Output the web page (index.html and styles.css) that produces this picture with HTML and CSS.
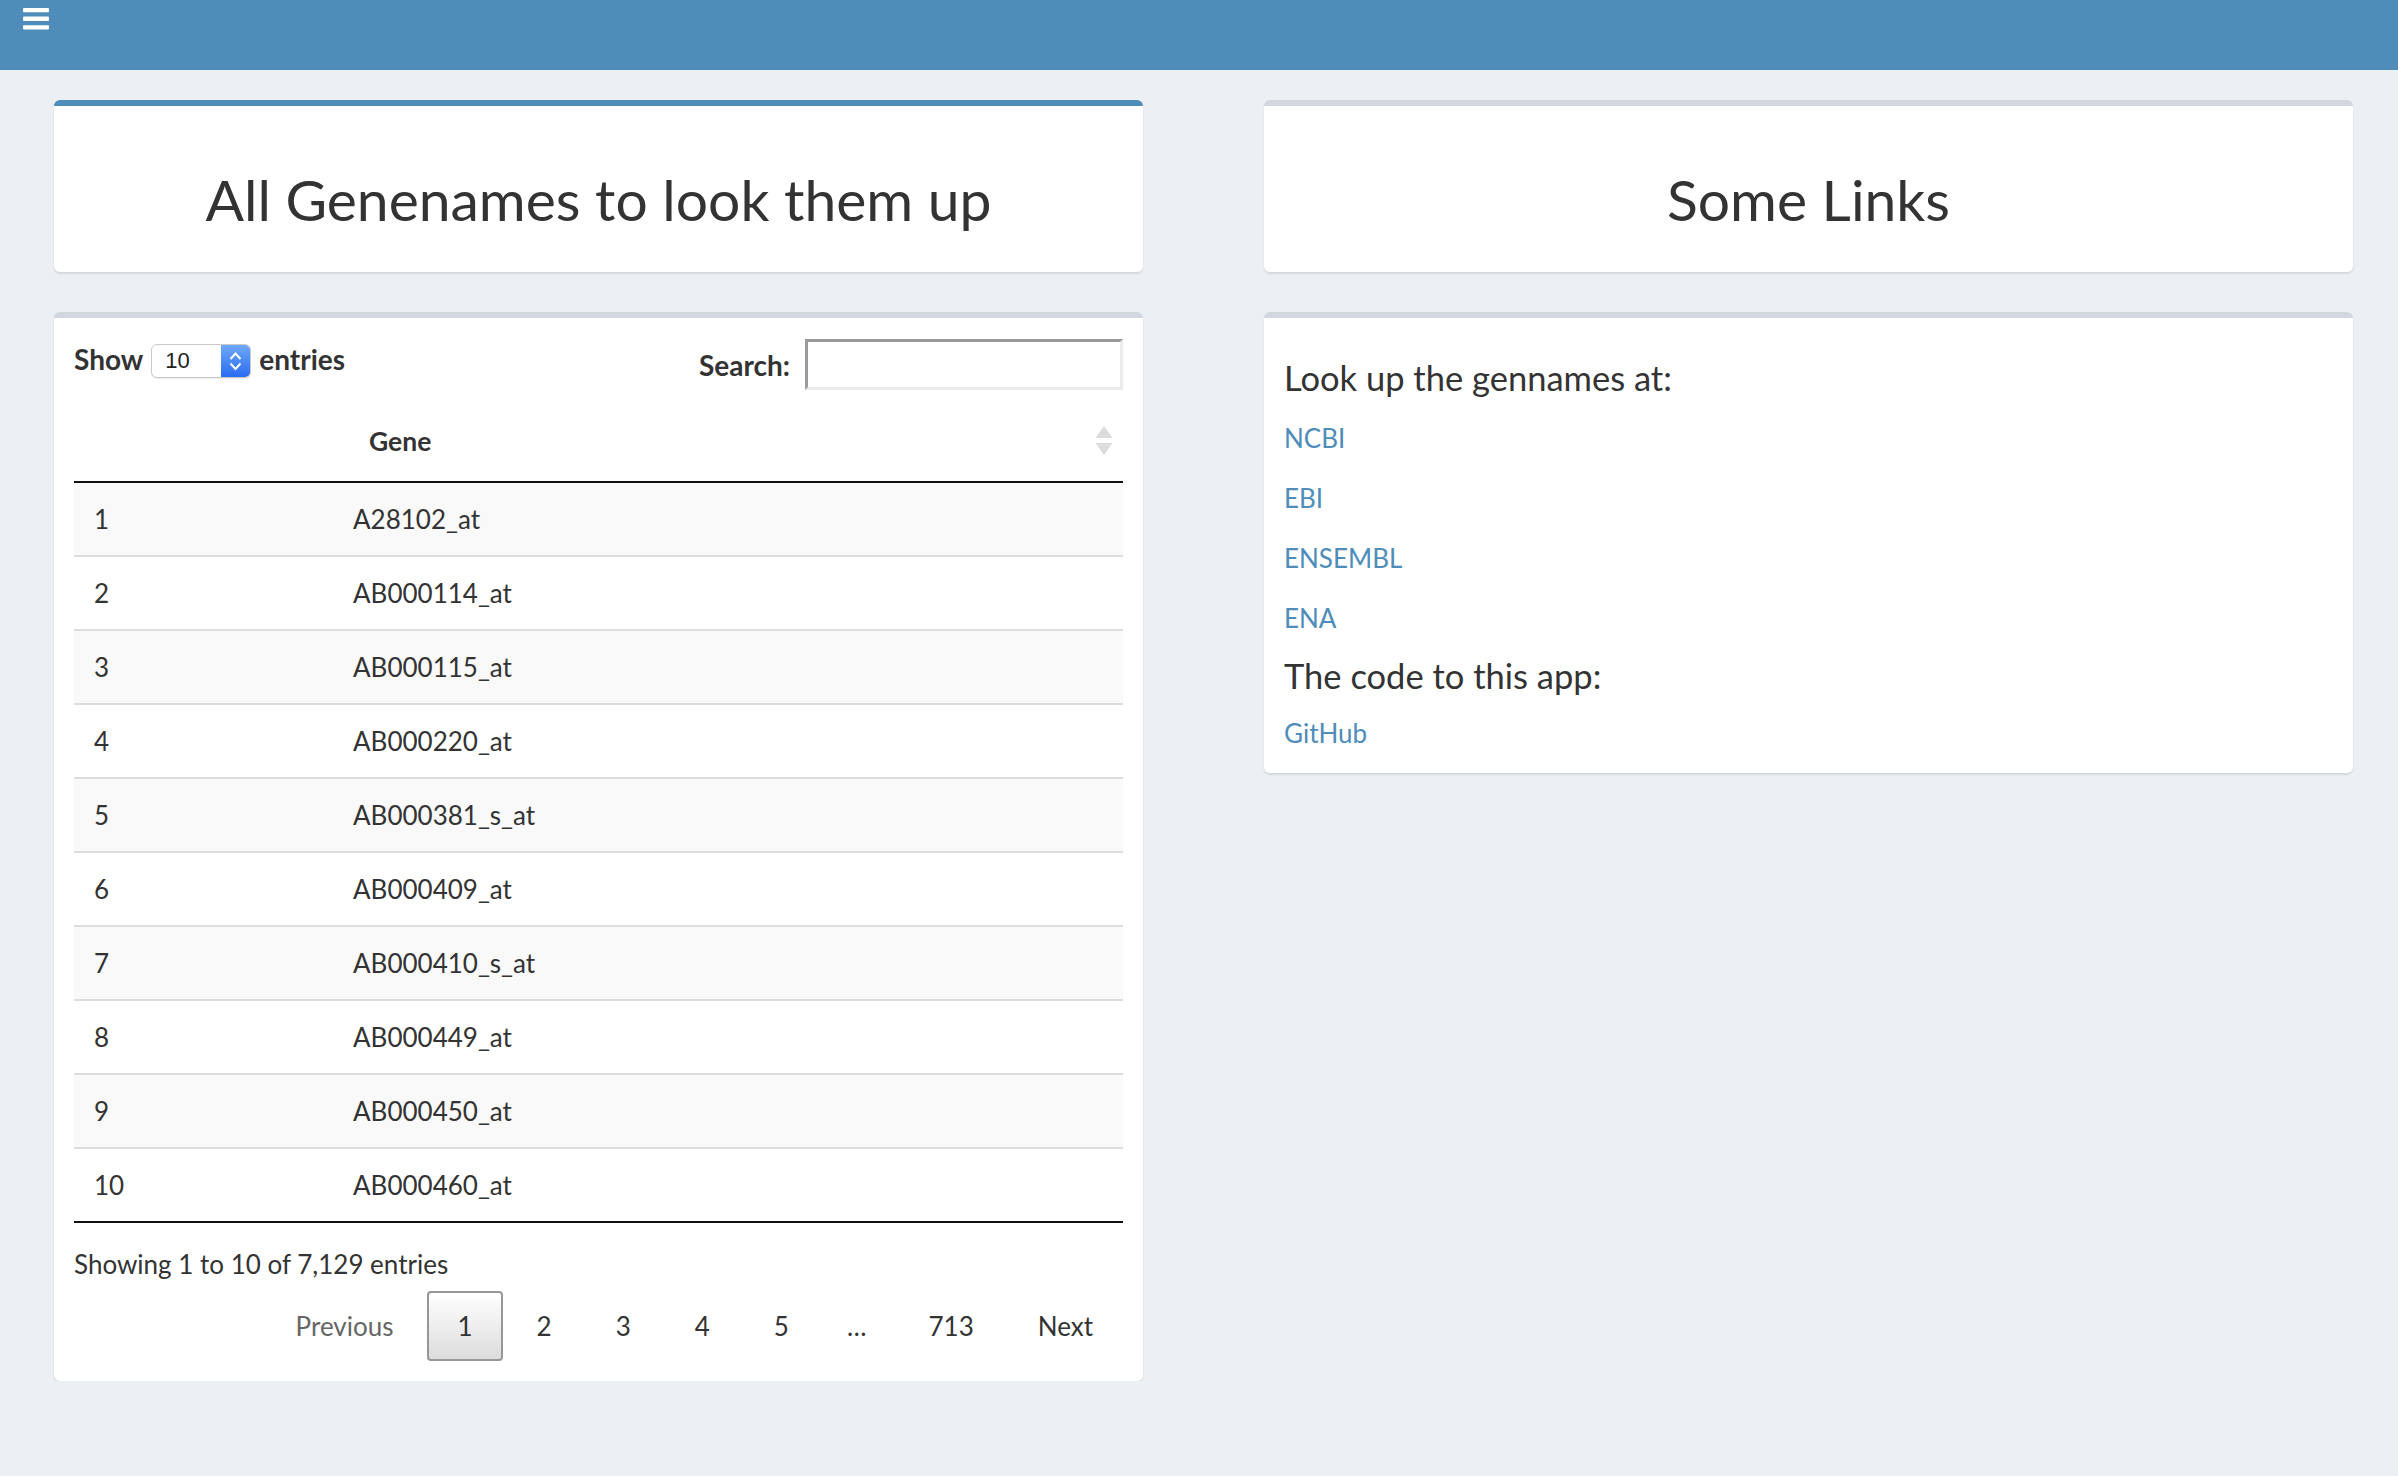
FILE: index.html
```html
<!DOCTYPE html>
<html lang="en">
<head>
<meta charset="utf-8">
<title>Genenames</title>
<link rel="stylesheet" href="styles.css">
</head>
<body>
<header class="topbar">
  <span class="menu-toggle" aria-label="Toggle navigation">
    <svg width="26" height="22" viewBox="0 0 26 22"><rect x="0" y="0" width="26" height="4.3" rx="1" fill="#fff"/><rect x="0" y="8.6" width="26" height="4.3" rx="1" fill="#fff"/><rect x="0" y="17.2" width="26" height="4.3" rx="1" fill="#fff"/></svg>
  </span>
</header>
<main class="content">
  <div class="col">
    <section class="box box-primary">
      <div class="box-body">
        <h2 class="box-heading">All Genenames to look them up</h2>
      </div>
    </section>
    <section class="box">
      <div class="box-body">
        <div class="dt-toolbar">
          <label class="dt-length">Show
            <span class="select-box"><span class="select-value">10</span><span class="select-arrows"><svg width="29" height="34" viewBox="0 0 29 34"><polyline points="9.5,15 14.5,9.5 19.5,15" fill="none" stroke="#fff" stroke-width="2"/><polyline points="9.5,19.5 14.5,25 19.5,19.5" fill="none" stroke="#fff" stroke-width="2"/></svg></span></span>
            entries</label>
          <label class="dt-filter">Search:<input type="search" class="search-input"></label>
        </div>
        <table class="dt-table">
          <colgroup><col class="col-idx"><col></colgroup>
          <thead>
            <tr><th></th><th><div class="th-inner"><span>Gene</span><svg class="sort-icon" width="18" height="30" viewBox="0 0 18 30"><polygon points="9,0 17.5,12 0.5,12" fill="#dcdcdc"/><polygon points="0.5,17 17.5,17 9,29" fill="#dcdcdc"/></svg></div></th></tr>
          </thead>
          <tbody>
            <tr><td>1</td><td>A28102_at</td></tr>
            <tr><td>2</td><td>AB000114_at</td></tr>
            <tr><td>3</td><td>AB000115_at</td></tr>
            <tr><td>4</td><td>AB000220_at</td></tr>
            <tr><td>5</td><td>AB000381_s_at</td></tr>
            <tr><td>6</td><td>AB000409_at</td></tr>
            <tr><td>7</td><td>AB000410_s_at</td></tr>
            <tr><td>8</td><td>AB000449_at</td></tr>
            <tr><td>9</td><td>AB000450_at</td></tr>
            <tr><td>10</td><td>AB000460_at</td></tr>
          </tbody>
        </table>
        <div class="dt-info">Showing 1 to 10 of 7,129 entries</div>
        <div class="dt-paginate">
          <span class="page-btn disabled">Previous</span>
          <span class="page-btn current">1</span>
          <span class="page-btn">2</span>
          <span class="page-btn">3</span>
          <span class="page-btn">4</span>
          <span class="page-btn">5</span>
          <span class="ellipsis">…</span>
          <span class="page-btn">713</span>
          <span class="page-btn">Next</span>
        </div>
      </div>
    </section>
  </div>
  <div class="col">
    <section class="box">
      <div class="box-body">
        <h2 class="box-heading">Some Links</h2>
      </div>
    </section>
    <section class="box">
      <div class="box-body links-body">
        <h4 class="links-head">Look up the gennames at:</h4>
        <p class="link-line"><a href="#">NCBI</a></p>
        <p class="link-line"><a href="#">EBI</a></p>
        <p class="link-line"><a href="#">ENSEMBL</a></p>
        <p class="link-line group-end"><a href="#">ENA</a></p>
        <h4 class="links-head second">The code to this app:</h4>
        <p class="link-line last"><a href="#">GitHub</a></p>
      </div>
    </section>
  </div>
</main>
</body>
</html>
```
FILE: styles.css
```css
* { box-sizing: border-box; }

body {
  margin: 0;
  background: #ecf0f5;
  font-family: Lato, "Liberation Sans", sans-serif;
  font-size: 26px;
  color: #333;
}

.topbar {
  height: 70px;
  background: #4e8cb9;
  padding: 8px 0 0 23px;
}

.menu-toggle { display: block; width: 26px; height: 22px; }
.menu-toggle svg { display: block; }

.content {
  display: grid;
  grid-template-columns: 1089px 1089px;
  column-gap: 121px;
  padding: 30px 45px 0 54px;
  align-items: start;
}

.col { display: flex; flex-direction: column; gap: 40px; }

.box {
  background: #fff;
  border-top: 6px solid #d2d6de;
  border-radius: 6px;
  box-shadow: 0 2px 2px rgba(0, 0, 0, 0.1);
}

.box-primary { border-top-color: #4e8cb9; }

.box-body { padding: 20px; }

.box-heading {
  margin: 40px 0 20px;
  font-size: 57px;
  line-height: 66px;
  font-weight: 400;
  text-align: center;
}

/* table toolbar */
.dt-toolbar {
  display: flex;
  justify-content: space-between;
  align-items: flex-start;
  height: 52px;
  margin-top: 1px;
}

.dt-length {
  display: flex;
  align-items: flex-start;
  font-weight: 700;
  font-size: 28px;
  line-height: 40px;
}

.select-box {
  display: flex;
  width: 100px;
  height: 34px;
  margin: 5px 8px 0;
  border: 1px solid #c9c9c9;
  border-radius: 6px;
  overflow: hidden;
  background: #fff;
  box-shadow: 0 1px 1px rgba(0, 0, 0, 0.08);
}

.select-value {
  flex: 1;
  padding-left: 13px;
  font-family: "Liberation Sans", Arial, sans-serif;
  font-weight: 400;
  font-size: 22px;
  line-height: 32px;
  color: #222;
}

.select-arrows {
  width: 29px;
  background: linear-gradient(#6fa8f8, #2a6cf1);
}
.select-arrows svg { display: block; margin-top: -1px; }

.dt-filter {
  display: flex;
  align-items: center;
  font-weight: 700;
  font-size: 28px;
  line-height: 40px;
}

.search-input {
  width: 318px;
  height: 51px;
  margin: 0 0 0 15px;
  border-style: solid;
  border-width: 3px;
  border-color: #9a9a9a #ebebeb #ebebeb #9a9a9a;
  background: #fff;
  padding: 0 8px;
  font: inherit;
}

/* table */
.dt-table {
  width: 100%;
  table-layout: fixed;
  border-collapse: separate;
  border-spacing: 0;
  margin-top: 10px;
  border-bottom: 2px solid #111;
}

.col-idx { width: 259px; }

.dt-table th {
  padding: 20px 10px 20px 36px;
  line-height: 40px;
  text-align: left;
  font-weight: 700;
  font-size: 26.5px;
  border-bottom: 2px solid #111;
}

.th-inner {
  display: flex;
  justify-content: space-between;
  align-items: center;
}

.sort-icon { display: block; }

.dt-table td {
  padding: 16px 20px;
  line-height: 40px;
  border-top: 2px solid #ddd;
}

.dt-table tbody tr:first-child td { border-top: 0; }
.dt-table tbody tr:nth-child(odd) { background: #f9f9f9; }

.dt-info {
  padding-top: 21px;
  line-height: 40px;
}

.dt-paginate {
  display: flex;
  justify-content: flex-end;
  padding-top: 7px;
}

.page-btn {
  min-width: 42px;
  padding: 13px 28px;
  margin-left: 4px;
  line-height: 40px;
  text-align: center;
  border: 2px solid transparent;
  border-radius: 4px;
  color: #333;
}

.page-btn.current {
  border-color: #979797;
  background: linear-gradient(#ffffff, #dcdcdc);
}

.page-btn.disabled { color: #666; }

.ellipsis {
  padding: 15px 28px;
  line-height: 40px;
}

/* links box */
.links-head {
  margin: 20px 0;
  font-size: 34.5px;
  line-height: 39.6px;
  font-weight: 400;
}

.links-head.second { margin: 18px 0; }

.link-line {
  margin: 0 0 20px;
  line-height: 40px;
}

.link-line.group-end { margin-bottom: 18px; }
.link-line.last { margin-bottom: 0; }

a { color: #4e8cb9; text-decoration: none; }
```
